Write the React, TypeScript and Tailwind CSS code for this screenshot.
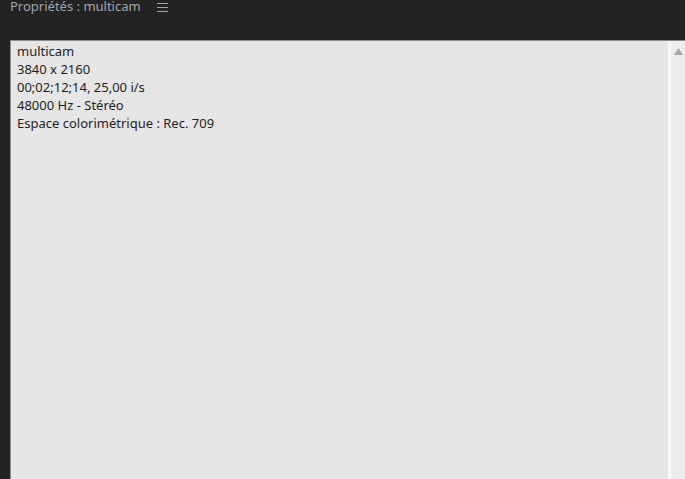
export default function App() {
  const lines = [
    "multicam",
    "3840 x 2160",
    "00;02;12;14, 25,00 i/s",
    "48000 Hz - Stéréo",
    "Espace colorimétrique : Rec. 709",
  ]

  return (
    <div className="w-[685px] h-[479px] overflow-hidden bg-[#232323] flex flex-col font-['Noto_Sans',sans-serif]">
      {/* en-tête du panneau */}
      <div className="h-[40px] shrink-0 flex items-start pl-[10px] -mt-[4px]">
        <span className="text-[13px] leading-[20px] text-[#a3a3ad]">Propriétés : multicam</span>
        <svg className="ml-[16px] mt-[7px]" width="11" height="9" viewBox="0 0 11 9">
          <path d="M0 0.5 H11 M0 4.5 H11 M0 8.5 H11" stroke="#a3a3ad" strokeWidth="1.2" />
        </svg>
      </div>

      <div className="flex-1 flex ml-[10px] mt-[4px] border-l border-t border-[#8a8a8a] min-h-0">
        <div className="flex-1 bg-[#e6e6e6] pl-[6px] pt-[1px] text-[13px] leading-[18px] text-[#1e1e1e]">
          {lines.map((l) => (
            <div key={l}>{l}</div>
          ))}
        </div>
        <div className="w-[3px] bg-[#f7f7f7]" />
        <div className="w-[14px] bg-[#eeeeee] flex justify-center pt-[7px]">
          <svg width="9" height="7" viewBox="0 0 9 7">
            <path d="M4.5 0 L9 7 L0 7 Z" fill="#a8a8a8" />
          </svg>
        </div>
      </div>
    </div>
  )
}
